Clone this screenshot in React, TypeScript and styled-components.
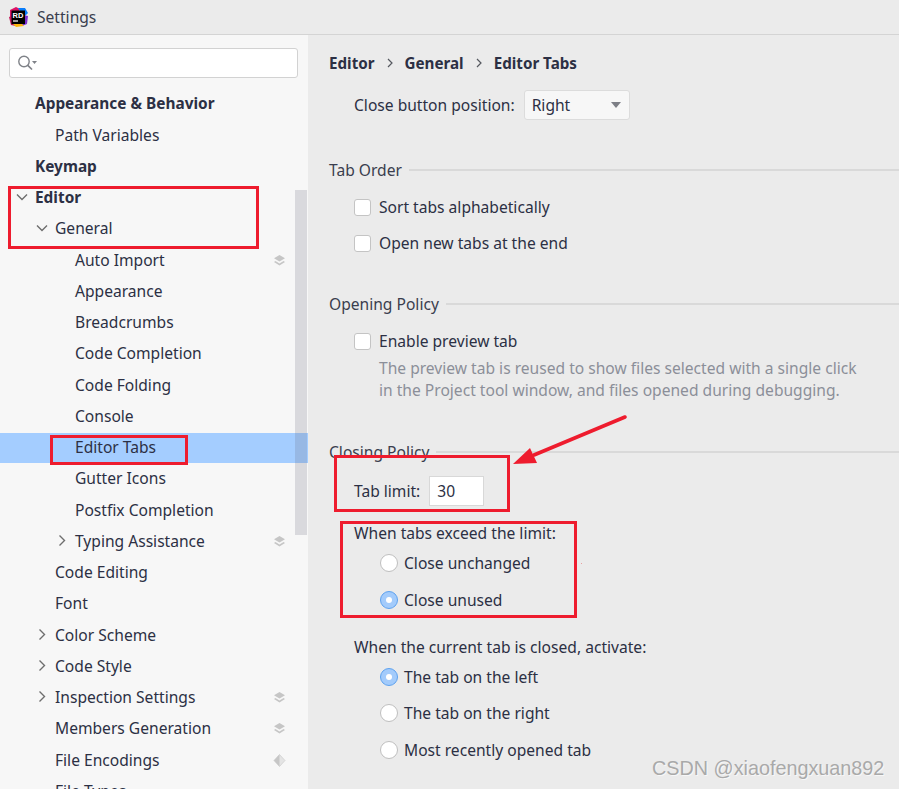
import React from "react";
import styled, { createGlobalStyle } from "styled-components";

const Global = createGlobalStyle`
  html, body { margin: 0; padding: 0; background: #ebebeb; }
  body { font-family: "Noto Sans", "Open Sans", sans-serif; color: #2c3044; }
`;

const Page = styled.div`
  position: relative;
  width: 899px;
  height: 789px;
  overflow: hidden;
  font-size: 15.6px;
`;
const TitleBar = styled.header`
  height: 34px;
  box-sizing: content-box;
  border-bottom: 1px solid #d4d4d4;
  background: #ebebeb;
  display: flex;
  align-items: center;
  padding-left: 8px;
  gap: 9px;
  color: #3a3e4e;
`;
const Body = styled.div`
  display: flex;
  height: 754px;
`;
const Sidebar = styled.aside`
  position: relative;
  width: 308px;
  flex: none;
  background: #f7f7f7;
  overflow: hidden;
  padding-top: 13px;
  box-sizing: border-box;
`;
const Search = styled.div`
  margin-left: 9px;
  width: 289px;
  height: 30px;
  box-sizing: border-box;
  background: #fff;
  border: 1px solid #d2d2d2;
  border-radius: 3px;
  display: flex;
  align-items: center;
  padding-left: 7px;
`;
const Tree = styled.ul`
  list-style: none;
  margin: 10.3px 0 0;
  padding: 0;
`;
const Row = styled.li<{ $level: number; $selected?: boolean }>`
  position: relative;
  height: 31.25px;
  line-height: 31.25px;
  padding-left: ${(p) => 35 + p.$level * 20}px;
  background: ${(p) => (p.$selected ? "linear-gradient(#a4cdff, #a4cdff) 0 1px no-repeat" : "transparent")};
  white-space: nowrap;
`;
const RowLabel = styled.span<{ $bold?: boolean }>`
  font-weight: ${(p) => (p.$bold ? 700 : 400)};
  font-size: ${(p) => (p.$bold ? "15.4px" : "inherit")};
`;
const Chevron = styled.svg<{ $level: number }>`
  position: absolute;
  left: ${(p) => 16 + p.$level * 20}px;
  top: 9px;
`;
const Badge = styled.svg`
  position: absolute;
  left: 273px;
  top: 9px;
`;
const Scrollbar = styled.div`
  position: absolute;
  left: 295px;
  top: 155px;
  width: 12px;
  height: 345px;
  background: rgba(100, 100, 120, 0.2);
`;
const Content = styled.main`
  flex: 1;
  padding-left: 21px;
  background: #ebebeb;
  min-width: 0;
`;
const Breadcrumb = styled.nav`
  height: 24px;
  margin-top: 16px;
  display: flex;
  align-items: center;
  font-weight: 700;
  font-size: 15.2px;
  gap: 11px;
`;
const Line = styled.div<{ $top: number; $h: number; $left?: number }>`
  margin-top: ${(p) => p.$top}px;
  height: ${(p) => p.$h}px;
  margin-left: ${(p) => p.$left ?? 25}px;
  display: flex;
  align-items: center;
  white-space: nowrap;
`;
const GroupTitle = styled.div<{ $top: number }>`
  margin-top: ${(p) => p.$top}px;
  height: 20px;
  display: flex;
  align-items: center;
  gap: 7px;
  color: #3a3e4e;
  &::after {
    content: "";
    flex: 1;
    height: 2px;
    background: #d9d9d9;
  }
`;
const Select = styled.div`
  margin-left: 9px;
  width: 106px;
  height: 30px;
  box-sizing: border-box;
  background: #f7f7f7;
  border: 1px solid #dcdcdc;
  border-radius: 3px;
  display: flex;
  align-items: center;
  justify-content: space-between;
  padding: 0 8px 0 7px;
`;
const Caret = styled.span`
  width: 0;
  height: 0;
  border-left: 5.5px solid transparent;
  border-right: 5.5px solid transparent;
  border-top: 6px solid #7d7f86;
`;
const Checkbox = styled.span`
  width: 17px;
  height: 17px;
  box-sizing: border-box;
  background: #fff;
  border: 1px solid #c4c4c4;
  border-radius: 3px;
  margin-right: 8px;
`;
const Radio = styled.span<{ $on?: boolean }>`
  width: 18px;
  height: 18px;
  box-sizing: border-box;
  border-radius: 50%;
  margin-left: 26px;
  margin-right: 6px;
  background: ${(p) => (p.$on ? "#a3cbfb" : "#fff")};
  border: 1px solid ${(p) => (p.$on ? "#5ea2ef" : "#bfbfbf")};
  display: flex;
  align-items: center;
  justify-content: center;
  &::after {
    content: "";
    width: 6px;
    height: 6px;
    border-radius: 50%;
    background: ${(p) => (p.$on ? "#fff" : "transparent")};
  }
`;
const Hint = styled.p`
  margin: 4px 0 0 50px;
  color: #8b8f99;
  line-height: 22px;
  white-space: nowrap;
`;
const NumberField = styled.div`
  margin-left: 9px;
  width: 55px;
  height: 30px;
  box-sizing: border-box;
  background: #fff;
  border: 1px solid #d8d8d8;
  padding-left: 7px;
  display: flex;
  align-items: center;
`;
const Mark = styled.div<{ $x: number; $y: number; $w: number; $h: number }>`
  position: absolute;
  left: ${(p) => p.$x}px;
  top: ${(p) => p.$y}px;
  width: ${(p) => p.$w}px;
  height: ${(p) => p.$h}px;
  box-sizing: border-box;
  border: 3px solid #ee1c2e;
`;
const Arrow = styled.svg`
  position: absolute;
  left: 510px;
  top: 405px;
`;
const Speck = styled.i`
  position: absolute;
  left: 581px;
  top: 563px;
  width: 1px;
  height: 1px;
  background: #e8a0a0;
`;
const Watermark = styled.div`
  position: absolute;
  left: 652px;
  top: 756px;
  font-family: "Liberation Sans", sans-serif;
  font-size: 19.8px;
  line-height: 24px;
  color: #a9a9a9;
  text-shadow: 1px 1px 0 #f7f7f7;
  white-space: nowrap;
`;

const Logo = () => (
  <svg width="20" height="20" viewBox="0 0 20 20">
    <polygon points="2,3 8,0 12,2 9,10 2,12" fill="#dd1265" />
    <polygon points="1,10 6,8 8,19 3,18" fill="#c21456" />
    <polygon points="10,1 17,1 20,6 16,10" fill="#087cfa" />
    <polygon points="15,8 20,9 19,17 14,19" fill="#7b2fd0" />
    <polygon points="5,17 13,16 16,19 8,20" fill="#fdb60d" />
    <rect x="3.5" y="3.5" width="13.5" height="13.5" fill="#000" />
    <text x="4.6" y="10.6" fontSize="7.5" fontWeight="700" fill="#fff" fontFamily="Liberation Sans, sans-serif">RD</text>
    <rect x="5" y="13.4" width="5" height="1.2" fill="#fff" />
  </svg>
);

const SearchIcon = () => (
  <svg width="22" height="18" viewBox="0 0 22 18" fill="none">
    <circle cx="7" cy="7.5" r="5.2" stroke="#7f8288" strokeWidth="1.4" />
    <path d="M10.8 11.3 L15 15.5" stroke="#7f8288" strokeWidth="1.7" />
    <path d="M15 7 H20 L17.5 10 Z" fill="#7f8288" />
  </svg>
);

const Chev = ({ open, level }: { open?: boolean; level: number }) => (
  <Chevron $level={level} width="12" height="12" viewBox="0 0 12 12" fill="none">
    <path d={open ? "M1 3.5 L6 8.5 L11 3.5" : "M3.5 0.5 L8.5 5.5 L3.5 10.5"} stroke="#6e6e6e" strokeWidth="1.4" />
  </Chevron>
);

const Layers = () => (
  <Badge width="13" height="13" viewBox="0 0 13 13">
    <path d="M6.5 1 L12 4.2 L6.5 7.4 L1 4.2 Z" fill="#c6c6c6" />
    <path d="M2.4 7 L6.5 9.4 L10.6 7 L12 8 L6.5 11.4 L1 8 Z" fill="#c6c6c6" />
  </Badge>
);

const Diamond = () => (
  <Badge width="13" height="13" viewBox="0 0 13 13">
    <path d="M6.5 0.5 L12 6.5 L6.5 12.5 L1 6.5 Z" fill="#e4e4e4" stroke="#c6c6c6" strokeWidth="0.6" />
    <path d="M6.5 0.5 L1 6.5 L6.5 12.5 Z" fill="#c6c6c6" />
  </Badge>
);

type Item = { t: string; l: number; bold?: boolean; c?: "open" | "closed"; b?: "layers" | "diamond"; sel?: boolean };
const items: Item[] = [
  { t: "Appearance & Behavior", l: 0, bold: true },
  { t: "Path Variables", l: 1 },
  { t: "Keymap", l: 0, bold: true },
  { t: "Editor", l: 0, bold: true, c: "open" },
  { t: "General", l: 1, c: "open" },
  { t: "Auto Import", l: 2, b: "layers" },
  { t: "Appearance", l: 2 },
  { t: "Breadcrumbs", l: 2 },
  { t: "Code Completion", l: 2 },
  { t: "Code Folding", l: 2 },
  { t: "Console", l: 2 },
  { t: "Editor Tabs", l: 2, sel: true },
  { t: "Gutter Icons", l: 2 },
  { t: "Postfix Completion", l: 2 },
  { t: "Typing Assistance", l: 2, c: "closed", b: "layers" },
  { t: "Code Editing", l: 1 },
  { t: "Font", l: 1 },
  { t: "Color Scheme", l: 1, c: "closed" },
  { t: "Code Style", l: 1, c: "closed" },
  { t: "Inspection Settings", l: 1, c: "closed", b: "layers" },
  { t: "Members Generation", l: 1, b: "layers" },
  { t: "File Encodings", l: 1, b: "diamond" },
  { t: "File Types", l: 1 },
];

const Sep = () => (
  <svg width="8" height="10" viewBox="0 0 8 10" fill="none">
    <path d="M2 1 L6 5 L2 9" stroke="#55585f" strokeWidth="1.2" />
  </svg>
);

export default function App() {
  return (
    <Page>
      <Global />
      <TitleBar>
        <Logo />
        <span>Settings</span>
      </TitleBar>
      <Body>
        <Sidebar>
          <Search>
            <SearchIcon />
          </Search>
          <Tree>
            {items.map((i) => (
              <Row key={i.t} $level={i.l} $selected={i.sel}>
                {i.c && <Chev open={i.c === "open"} level={i.l} />}
                <RowLabel $bold={i.bold}>{i.t}</RowLabel>
                {i.b === "layers" && <Layers />}
                {i.b === "diamond" && <Diamond />}
              </Row>
            ))}
          </Tree>
          <Scrollbar />
        </Sidebar>
        <Content>
          <Breadcrumb>
            <span>Editor</span>
            <Sep />
            <span>General</span>
            <Sep />
            <span>Editor Tabs</span>
          </Breadcrumb>
          <Line $top={15} $h={30}>
            Close button position:
            <Select>
              Right
              <Caret />
            </Select>
          </Line>
          <GroupTitle $top={40}>Tab Order</GroupTitle>
          <Line $top={15} $h={24}>
            <Checkbox />
            Sort tabs alphabetically
          </Line>
          <Line $top={12} $h={24}>
            <Checkbox />
            Open new tabs at the end
          </Line>
          <GroupTitle $top={39}>Opening Policy</GroupTitle>
          <Line $top={15} $h={24}>
            <Checkbox />
            Enable preview tab
          </Line>
          <Hint>
            The preview tab is reused to show files selected with a single click
            <br />
            in the Project tool window, and files opened during debugging.
          </Hint>
          <GroupTitle $top={41}>Closing Policy</GroupTitle>
          <Line $top={14} $h={30}>
            Tab limit:
            <NumberField>30</NumberField>
          </Line>
          <Line $top={16} $h={22}>When tabs exceed the limit:</Line>
          <Line $top={7} $h={24}>
            <Radio />
            Close unchanged
          </Line>
          <Line $top={13} $h={24}>
            <Radio $on />
            Close unused
          </Line>
          <Line $top={24} $h={22}>When the current tab is closed, activate:</Line>
          <Line $top={7} $h={24}>
            <Radio $on />
            The tab on the left
          </Line>
          <Line $top={12} $h={24}>
            <Radio />
            The tab on the right
          </Line>
          <Line $top={13} $h={24}>
            <Radio />
            Most recently opened tab
          </Line>
        </Content>
      </Body>
      <Mark $x={8} $y={186} $w={251} $h={63} />
      <Mark $x={50} $y={435} $w={138} $h={30} />
      <Mark $x={334} $y={455} $w={176} $h={57} />
      <Mark $x={340} $y={521} $w={237} $h={97} />
      <Arrow width="120" height="70" viewBox="0 0 120 70">
        <path d="M115 12 L24 50" stroke="#ee1c2e" strokeWidth="3.6" strokeLinecap="round" />
        <path d="M3 59 L20 43 L27 58 Z" fill="#ee1c2e" />
      </Arrow>
      <Speck />
      <Watermark>CSDN @xiaofengxuan892</Watermark>
    </Page>
  );
}
